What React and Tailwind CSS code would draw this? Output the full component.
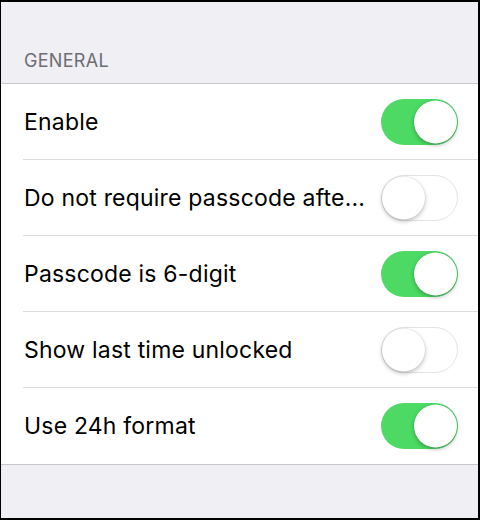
import React, { useState } from "react";

const initialSettings = [
  { id: "enable", label: "Enable", on: true },
  { id: "noPasscode", label: "Do not require passcode afte...", on: false },
  { id: "sixDigit", label: "Passcode is 6-digit", on: true },
  { id: "lastUnlocked", label: "Show last time unlocked", on: false },
  { id: "format24", label: "Use 24h format", on: true },
];

const Toggle = ({ on, onChange }) => (
  <button
    onClick={onChange}
    className={`relative shrink-0 w-[77px] h-[46px] rounded-full transition-colors ${
      on ? "bg-[#4cd964]" : "bg-white border-[1.5px] border-[#e3e3e6]"
    }`}
  >
    <span
      className={`absolute top-1/2 -translate-y-1/2 w-[43px] h-[43px] rounded-full bg-white shadow-[0_2px_4px_rgba(0,0,0,0.25),0_0_0_0.5px_rgba(0,0,0,0.08)] transition-all ${
        on ? "right-[1.5px]" : "left-[0px]"
      }`}
    />
  </button>
);

export default function App() {
  const [settings, setSettings] = useState(initialSettings);

  const flip = (id) =>
    setSettings((prev) => prev.map((s) => (s.id === id ? { ...s, on: !s.on } : s)));

  return (
    <div
      className="w-[480px] h-[520px] bg-[#efeff4] border-t-2 border-l border-r-2 border-b-2 border-black overflow-hidden"
      style={{ fontFamily: "Inter, 'Noto Sans', sans-serif" }}
    >
      {/* Section header */}
      <div className="h-[81px] flex items-end px-[23px] pb-[9px]">
        <span className="text-[18px] text-[#6d6d72] tracking-[0.3px]">GENERAL</span>
      </div>

      {/* Settings group */}
      <div className="bg-white border-y border-[#c8c7cc]">
        {settings.map((s, i) => (
          <div key={s.id} className="pl-[22px]">
            <div
              className={`h-[76px] flex items-center justify-between pr-[20px] ${
                i < settings.length - 1 ? "border-b border-[#dcdce0]" : ""
              }`}
            >
              <span className="text-[23px] tracking-[0.2px] text-black whitespace-nowrap pl-[1px] pt-[1px]">
                {s.label}
              </span>
              <Toggle on={s.on} onChange={() => flip(s.id)} />
            </div>
          </div>
        ))}
      </div>
    </div>
  );
}
